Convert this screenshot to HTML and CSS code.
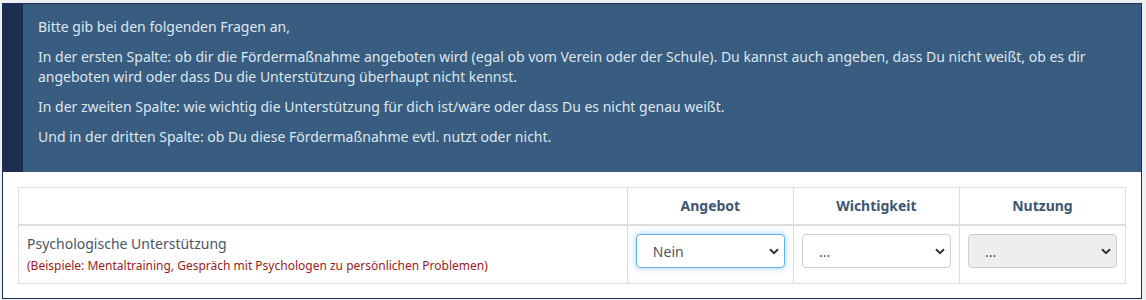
FILE: index.html
```html
<!DOCTYPE html>
<html>
<head>
  <meta charset="utf-8">
  <title>Fördermaßnahmen</title>
  <link rel="stylesheet" href="styles.css">
</head>
<body>
  <div class="panel">
    <div class="intro">
      <p>Bitte gib bei den folgenden Fragen an,</p>
      <p>In der ersten Spalte: ob dir die Fördermaßnahme angeboten wird (egal ob vom Verein oder der Schule). Du kannst auch angeben, dass Du nicht weißt, ob es dir angeboten wird oder dass Du die Unterstützung überhaupt nicht kennst.</p>
      <p>In der zweiten Spalte: wie wichtig die Unterstützung für dich ist/wäre oder dass Du es nicht genau weißt.</p>
      <p>Und in der dritten Spalte: ob Du diese Fördermaßnahme evtl. nutzt oder nicht.</p>
    </div>

    <div class="content">
      <table class="questions">
        <thead>
          <tr>
            <th class="item-col"></th>
            <th class="choice-col">Angebot</th>
            <th class="choice-col">Wichtigkeit</th>
            <th class="choice-col">Nutzung</th>
          </tr>
        </thead>
        <tbody>
          <tr>
            <td>
              <div class="item-title">Psychologische Unterstützung</div>
              <div class="item-hint">(Beispiele: Mentaltraining, Gespräch mit Psychologen zu persönlichen Problemen)</div>
            </td>
            <td>
              <div class="select-wrap">
                <select class="form-select focused">
                  <option>Nein</option>
                </select>
                <svg class="chevron" width="10" height="7" viewBox="0 0 10 7"><path d="M1 1.2 L5 5.2 L9 1.2" fill="none" stroke="#333" stroke-width="2"/></svg>
              </div>
            </td>
            <td>
              <div class="select-wrap">
                <select class="form-select">
                  <option>...</option>
                </select>
                <svg class="chevron" width="10" height="7" viewBox="0 0 10 7"><path d="M1 1.2 L5 5.2 L9 1.2" fill="none" stroke="#333" stroke-width="2"/></svg>
              </div>
            </td>
            <td>
              <div class="select-wrap">
                <select class="form-select" disabled>
                  <option>...</option>
                </select>
                <svg class="chevron" width="10" height="7" viewBox="0 0 10 7"><path d="M1 1.2 L5 5.2 L9 1.2" fill="none" stroke="#333" stroke-width="2"/></svg>
              </div>
            </td>
          </tr>
        </tbody>
      </table>
    </div>
  </div>
</body>
</html>
```

FILE: styles.css
```css
body {
  margin: 0;
  padding: 3px 0 0 2px;
  background-color: #eef0f3;
  font-family: "Noto Sans", "Open Sans", sans-serif;
  font-size: 14px;
  line-height: 20px;
  color: #4a5664;
}

.panel {
  width: 1138px;
  border: 1px solid #1c2f50;
  background-color: #fff;
}

.intro {
  background-color: #385d80;
  border-left: 20px solid #1c2f50;
  color: #dfe6ee;
  padding: 13px 15px 15px 15px;
}

.intro p {
  margin: 0 0 10px 0;
}

.content {
  padding: 15px 15px 14px 15px;
}

.questions {
  width: 100%;
  border-collapse: collapse;
  border: 1px solid #ddd;
}

.questions th,
.questions td {
  border: 1px solid #ddd;
  padding: 8px;
  vertical-align: top;
}

.questions th {
  border-bottom: 2px solid #ddd;
  color: #3d5671;
  font-weight: bold;
  text-align: center;
}

.item-col {
  width: 55%;
}

.choice-col {
  width: 15%;
}

.item-title {
  color: #4a5664;
}

.item-hint {
  margin-top: 3px;
  font-size: 12px;
  line-height: 18px;
  color: #9b1c1c;
}

.select-wrap {
  position: relative;
}

.form-select {
  display: block;
  width: 100%;
  height: 34px;
  padding: 0 28px 0 16px;
  border: 1px solid #ccc;
  border-radius: 4px;
  background-color: #fff;
  color: #555;
  font-family: inherit;
  font-size: 14px;
  -webkit-appearance: none;
  appearance: none;
  outline: none;
}

.form-select.focused {
  border-color: #66afe9;
  box-shadow: 0 0 6px rgba(102, 175, 233, 0.6);
}

.form-select:disabled {
  background-color: #eee;
  opacity: 1;
}

.chevron {
  position: absolute;
  right: 6px;
  top: 14px;
  pointer-events: none;
}
```
